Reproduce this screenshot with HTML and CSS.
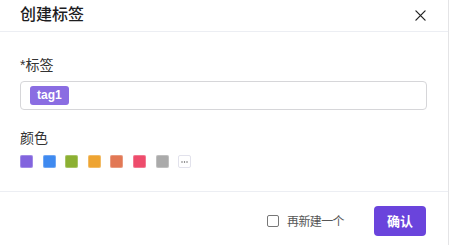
FILE: index.html
```html
<!DOCTYPE html>
<html lang="zh-CN">

<head>
    <meta charset="UTF-8">
    <title>创建标签</title>
    <link rel="stylesheet" href="styles.css">
</head>

<body>
    <div class="dialog">
        <div class="dialog-header">
            <h2 class="dialog-title">创建标签</h2>
            <button class="close-btn" aria-label="关闭">
                <svg viewBox="0 0 12 12" width="11" height="11">
                    <path d="M1 1 L11 11 M11 1 L1 11" stroke="#222" stroke-width="1.4" stroke-linecap="round" fill="none"/>
                </svg>
            </button>
        </div>

        <div class="dialog-body">
            <div class="field">
                <label class="field-label">*标签</label>
                <div class="tag-input">
                    <span class="tag-chip">tag1</span>
                </div>
            </div>

            <div class="field field-color">
                <label class="field-label">颜色</label>
                <div class="swatches">
                    <span class="swatch" style="background-color: #8264de;"></span>
                    <span class="swatch" style="background-color: #3f8af0;"></span>
                    <span class="swatch" style="background-color: #8cb032;"></span>
                    <span class="swatch" style="background-color: #eea432;"></span>
                    <span class="swatch" style="background-color: #e27855;"></span>
                    <span class="swatch" style="background-color: #ee4c6c;"></span>
                    <span class="swatch" style="background-color: #aaaaaa;"></span>
                    <span class="swatch swatch-more">
                        <svg viewBox="0 0 11 11" width="11" height="11">
                            <circle cx="3" cy="6" r="0.7" fill="#555"/>
                            <circle cx="5.5" cy="6" r="0.7" fill="#555"/>
                            <circle cx="8" cy="6" r="0.7" fill="#555"/>
                        </svg>
                    </span>
                </div>
            </div>
        </div>

        <div class="dialog-footer">
            <label class="again">
                <span class="checkbox"></span>
                再新建一个
            </label>
            <button class="confirm-btn">确认</button>
        </div>
    </div>
</body>

</html>
```

FILE: styles.css
```css
html, body {
    margin: 0;
    padding: 0;
    background-color: #fff;
}

body {
    font-family: "Liberation Sans", "Noto Sans CJK SC", sans-serif;
    color: #333;
}

.dialog {
    width: 448px;
    height: 245px;
    border-right: 1px solid #e4e4e6;
    display: flex;
    flex-direction: column;
}

.dialog-header {
    height: 32px;
    box-sizing: border-box;
    padding: 3px 21px 4px 20px;
    display: flex;
    align-items: center;
    justify-content: space-between;
    border-bottom: 1px solid #eceef3;
}

.dialog-title {
    margin: 0;
    font-size: 16px;
    line-height: 22px;
    font-weight: 500;
    color: #1d1d1f;
}

.close-btn {
    border: none;
    background: none;
    padding: 0;
    margin-right: 1px;
    width: 12px;
    height: 12px;
    display: flex;
    align-items: center;
    justify-content: center;
    cursor: pointer;
}

.dialog-body {
    padding: 23px 21px 0 20px;
    height: 160px;
    box-sizing: border-box;
    border-bottom: 1px solid #eceef3;
}

.field-label {
    display: block;
    font-size: 14px;
    line-height: 20px;
    color: #333;
}

.tag-input {
    margin-top: 6px;
    height: 29px;
    box-sizing: border-box;
    border: 1px solid #d6d6d9;
    border-radius: 4px;
    padding: 0 9px;
    display: flex;
    align-items: center;
}

.tag-chip {
    background-color: #8a6de2;
    color: #fff;
    font-size: 12px;
    font-weight: bold;
    line-height: 19px;
    padding: 0 7px;
    border-radius: 3px;
}

.field-color {
    margin-top: 18px;
}

.swatches {
    margin-top: 7px;
    display: flex;
    gap: 9.6px;
}

.swatch {
    width: 13px;
    height: 13px;
    border-radius: 2px;
    box-sizing: border-box;
    box-shadow: inset 0 0 0 1px rgba(255, 255, 255, 0.25);
}

.swatch-more {
    border: 1px solid #e2e2ec;
    box-shadow: none;
    display: flex;
}

.dialog-footer {
    flex: 1;
    padding: 4px 22px 0 20px;
    display: flex;
    align-items: center;
    justify-content: flex-end;
    gap: 30px;
}

.again {
    display: flex;
    align-items: center;
    gap: 8px;
    font-size: 12px;
    letter-spacing: -0.6px;
    color: #555;
}

.checkbox {
    width: 12px;
    height: 12px;
    border: 1px solid #777;
    border-radius: 2px;
    box-sizing: border-box;
}

.confirm-btn {
    width: 52px;
    height: 30px;
    border: none;
    border-radius: 4px;
    background-color: #6a44dc;
    color: #fff;
    font-family: "Noto Sans CJK SC", sans-serif;
    font-size: 13px;
    font-weight: bold;
    cursor: pointer;
}
```
